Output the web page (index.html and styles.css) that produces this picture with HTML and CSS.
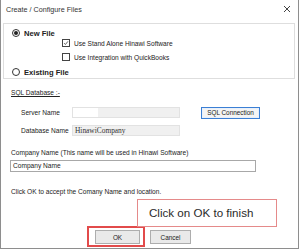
FILE: index.html
```html
<!DOCTYPE html>
<html lang="en">
<head>
    <title>Create / Configure Files</title>
    <link rel="stylesheet" href="styles.css">
</head>
<body>
<div id="win">
    <div class="titlebar">
        <span class="title">Create / Configure Files</span>
        <svg class="close" width="8" height="8" viewBox="0 0 8 8"><path d="M1 1L7 7M7 1L1 7" stroke="#444" stroke-width="1"/></svg>
    </div>

    <div class="group">
        <div class="opt r1">
            <span class="radio on"></span>
            <b>New File</b>
        </div>
        <div class="chk r2">
            <span class="box">
                <svg width="8" height="8" viewBox="0 0 8 8"><path d="M1.5 4.2L3.2 6L6.6 1.8" fill="none" stroke="#333" stroke-width="1"/></svg>
            </span>
            Use Stand Alone Hinawi Software
        </div>
        <div class="chk r3">
            <span class="box"></span>
            Use Integration with QuickBooks
        </div>
        <div class="opt r4">
            <span class="radio"></span>
            <b>Existing File</b>
        </div>
    </div>

    <div class="sqlhead">SQL Database :-</div>

    <div class="field srv">
        <span class="lbl">Server Name</span>
        <span class="inp"><span class="white"></span></span>
        <button class="sqlbtn" type="button">SQL Connection</button>
    </div>
    <div class="field db">
        <span class="lbl">Database Name</span>
        <span class="inp serif">HinawiCompany</span>
    </div>

    <div class="cname">Company Name (This name will be used in Hinawi Software)</div>
    <div class="cinput">Company Name</div>

    <div class="note">Click OK to accept the Comany Name and location.</div>

    <div class="buttons">
        <div class="mark">
            <button class="btn" type="button">OK</button>
        </div>
        <button class="btn cancel" type="button">Cancel</button>
    </div>

    <div class="callout">Click on OK to finish</div>
</div>
</body>
</html>
```

FILE: styles.css
```css
html, body {
    margin: 0;
    padding: 0;
    background: white;
}

#win {
    position: relative;
    width: 297px;
    height: 248px;
    border-left: 1px solid #8e8e8e;
    border-right: 1px solid #8e8e8e;
    border-bottom: 1px solid #8e8e8e;
    font-family: "Liberation Sans", Arial, sans-serif;
    font-size: 6.6px;
    color: #222;
    display: flex;
    flex-direction: column;
}

.titlebar {
    height: 18px;
    display: flex;
    align-items: center;
    justify-content: space-between;
    padding: 0 7px 0 5px;
    font-size: 7.2px;
    color: #333;
}

.group {
    box-sizing: border-box;
    height: 56px;
    margin: 5px 3px 0 2px;
    border: 1px solid #dedede;
    padding-top: 4px;
}

.opt, .chk {
    height: 10px;
    display: flex;
    align-items: center;
}

.opt {
    padding-left: 8px;
    font-size: 7.6px;
}

.opt b {
    margin-left: 4px;
}

.r3 {
    margin-top: 4px;
}

.r4 {
    margin-top: 5px;
}

.radio {
    box-sizing: border-box;
    width: 8px;
    height: 8px;
    border: 1px solid #333;
    border-radius: 50%;
    display: flex;
    align-items: center;
    justify-content: center;
    background: white;
}

.radio.on::after {
    content: "";
    width: 4px;
    height: 4px;
    border-radius: 50%;
    background: #222;
}

.chk {
    padding-left: 58px;
}

.box {
    box-sizing: border-box;
    width: 8px;
    height: 8px;
    border: 1px solid #444;
    margin-right: 4px;
    display: flex;
    align-items: center;
    justify-content: center;
    background: white;
}

.box svg {
    display: block;
}

.sqlhead {
    margin: 9px 0 0 10px;
    height: 10px;
    line-height: 10px;
    text-decoration: underline;
}

.field {
    display: flex;
    align-items: center;
    height: 11px;
    padding-left: 20px;
}

.srv {
    margin-top: 9px;
}

.db {
    margin-top: 7px;
}

.lbl {
    width: 51px;
}

.inp {
    box-sizing: border-box;
    width: 108px;
    height: 11px;
    background: #f0f0f0;
    border: 1px solid #e2e2e2;
    display: flex;
    align-items: center;
}

.inp .white {
    width: 25px;
    height: 9px;
    background: white;
}

.serif {
    font-family: "Liberation Serif", "Times New Roman", serif;
    font-size: 7.4px;
    padding-left: 2px;
    color: #333;
}

.sqlbtn {
    box-sizing: border-box;
    margin-left: 21px;
    width: 59px;
    height: 12px;
    padding: 0;
    border: 1px solid #3b7fd4;
    background: #f4f4f4;
    font-family: inherit;
    font-size: 6.4px;
    color: #222;
    box-shadow: inset 0 0 0 1px #e8f0fb;
}

.cname {
    margin: 12px 0 0 10px;
    height: 10px;
    line-height: 10px;
}

.cinput {
    box-sizing: border-box;
    margin: 2px 0 0 9px;
    width: 246px;
    height: 12px;
    border: 1px solid #a8a8a8;
    padding-left: 2px;
    line-height: 10px;
    background: white;
}

.note {
    margin: 15px 0 0 10px;
    height: 10px;
    line-height: 10px;
}

.buttons {
    display: flex;
    align-items: flex-start;
    margin: 29px 0 0 86px;
}

.mark {
    box-sizing: border-box;
    width: 58px;
    height: 21px;
    border: 2px solid #e24b4b;
    padding: 2px 0 0 6px;
}

.btn {
    box-sizing: border-box;
    width: 45px;
    height: 14px;
    padding: 0;
    border: 1px solid #adadad;
    background: #e9e9e9;
    font-family: inherit;
    font-size: 6.4px;
    color: #222;
    display: block;
}

.cancel {
    width: 41px;
    margin: 4px 0 0 5px;
}

/* annotation box drawn on top of the dialog */
.callout {
    position: absolute;
    left: 136px;
    top: 199px;
    box-sizing: border-box;
    width: 140px;
    height: 28px;
    border: 1px solid #e58a8a;
    background: white;
    font-size: 11.6px;
    color: #2a2a2a;
    padding-left: 11px;
    line-height: 26px;
}
```
